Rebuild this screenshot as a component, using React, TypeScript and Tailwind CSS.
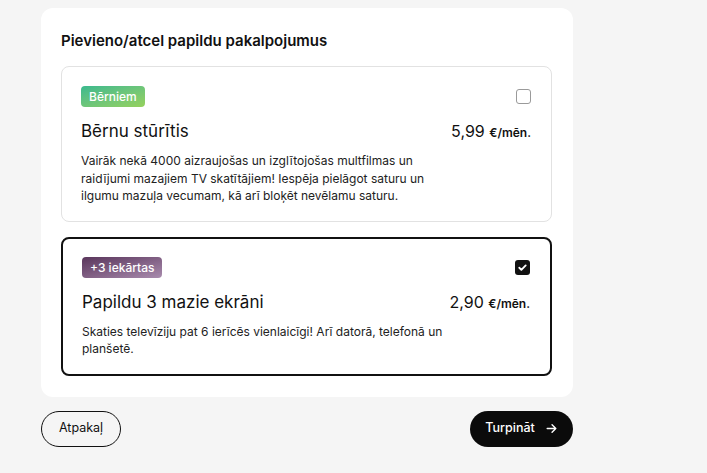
import { useState } from "react";

const font = { fontFamily: "Inter, 'Noto Sans', sans-serif" };

type Service = {
  id: string;
  badge: string;
  badgeClass: string;
  title: string;
  price: string;
  text: string;
  textWidth: string;
};

const services: Service[] = [
  {
    id: "kids",
    badge: "Bērniem",
    badgeClass: "bg-gradient-to-br from-[#38b98e] to-[#95d15c]",
    title: "Bērnu stūrītis",
    price: "5,99",
    text: "Vairāk nekā 4000 aizraujošas un izglītojošas multfilmas un raidījumi mazajiem TV skatītājiem! Iespēja pielāgot saturu un ilgumu mazuļa vecumam, kā arī bloķēt nevēlamu saturu.",
    textWidth: "w-[350px]",
  },
  {
    id: "screens",
    badge: "+3 iekārtas",
    badgeClass: "bg-gradient-to-br from-[#5a365c] to-[#a98cae]",
    title: "Papildu 3 mazie ekrāni",
    price: "2,90",
    text: "Skaties televīziju pat 6 ierīcēs vienlaicīgi! Arī datorā, telefonā un planšetē.",
    textWidth: "w-[380px]",
  },
];

function Checkbox({ checked }: { checked: boolean }) {
  if (checked) {
    return (
      <div className="w-[15px] h-[15px] rounded-[3px] bg-[#111] flex items-center justify-center">
        <svg width="11" height="11" viewBox="0 0 24 24" fill="none" stroke="white" strokeWidth="4" strokeLinecap="round" strokeLinejoin="round">
          <path d="M5 12.5l4.5 4.5L19 7.5" />
        </svg>
      </div>
    );
  }
  return <div className="w-[15px] h-[15px] rounded-[3px] border border-[#9a9a9a] bg-white" />;
}

export default function App() {
  const [selected, setSelected] = useState<Record<string, boolean>>({ kids: false, screens: true });

  return (
    <div className="min-h-[473px] bg-[#f5f5f5] pl-[41px] pt-[8px] w-[707px]" style={font}>
      <div className="w-[532px] bg-white rounded-[12px] px-[20px] pt-[23px] pb-[21px]">
        <h2 className="text-[15px] font-semibold text-[#111] leading-[20px]">
          Pievieno/atcel papildu pakalpojumus
        </h2>
        <div className="mt-[15px] flex flex-col gap-[15px]">
          {services.map((s) => {
            const on = selected[s.id];
            return (
              <div
                key={s.id}
                onClick={() => setSelected({ ...selected, [s.id]: !on })}
                className={`w-[491px] rounded-[8px] pl-[19px] pr-[20px] cursor-pointer ${
                  on ? "border-2 border-[#111] pt-[18px] pb-[16px]" : "border border-[#e2e2e2] pt-[19px] pb-[16px]"
                }`}
              >
                <div className="flex items-center justify-between">
                  <span className={`${s.badgeClass} text-white text-[12px] font-medium leading-[21px] h-[21px] px-[8px] rounded-[4px]`}>
                    {s.badge}
                  </span>
                  <Checkbox checked={on} />
                </div>
                <div className="mt-[12px] flex items-center justify-between">
                  <span className="text-[17px] text-[#111] leading-[22px]">{s.title}</span>
                  <span className="text-[#111]">
                    <span className="text-[16px]">{s.price} </span>
                    <span className="text-[12px] font-semibold">€/mēn.</span>
                  </span>
                </div>
                <p className={`mt-[9px] ${s.textWidth} text-[12px] leading-[17.5px] text-[#222]`}>{s.text}</p>
              </div>
            );
          })}
        </div>
      </div>
      <div className="w-[532px] mt-[14px] flex justify-between">
        <button className="h-[36px] w-[80px] rounded-full border-[1.5px] border-[#111] text-[12.5px] text-[#111] bg-transparent">
          Atpakaļ
        </button>
        <button className="h-[36px] w-[103px] rounded-full bg-[#0b0b0b] text-white text-[12.5px] font-medium flex items-center justify-center gap-[10px]">
          Turpināt
          <svg width="13" height="13" viewBox="0 0 24 24" fill="none" stroke="white" strokeWidth="2.5" strokeLinecap="round" strokeLinejoin="round">
            <path d="M4 12h16M13 5l7 7-7 7" />
          </svg>
        </button>
      </div>
    </div>
  );
}
